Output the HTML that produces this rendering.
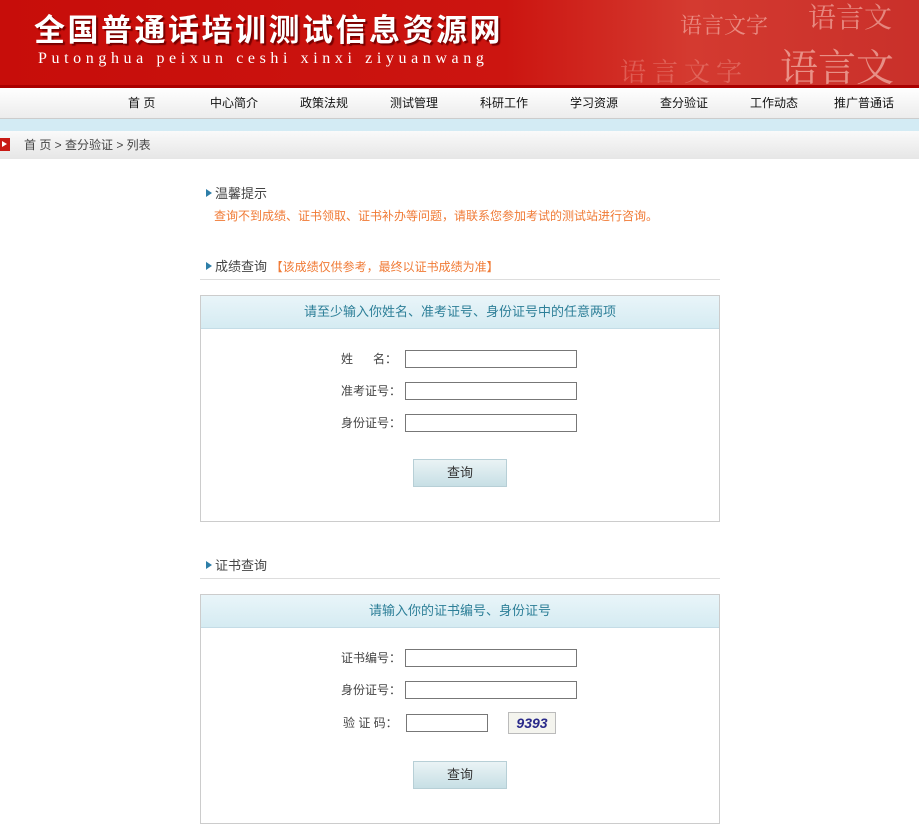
<!DOCTYPE html>
<html><head><meta charset="utf-8"><style>
*{margin:0;padding:0;box-sizing:border-box}
body{width:919px;height:810px;overflow:hidden;background:#fff;font-family:"Liberation Sans","Noto Sans CJK SC",sans-serif;font-size:12px;color:#333;position:relative;line-height:1.2}
.hd{position:absolute;left:0;top:0;width:919px;height:87px;background:linear-gradient(90deg,#c70d0a 0%,#cc1510 55%,#d43a30 75%,#c9302a 100%);overflow:hidden}
.hd .t{position:absolute;left:34px;top:8px;font-size:31px;line-height:40px;font-weight:bold;color:#fff;letter-spacing:2.5px;text-shadow:2px 2px 1px #700;font-family:"Noto Sans CJK SC",sans-serif}
.hd .s{position:absolute;left:38px;top:49px;font-size:16px;line-height:20px;color:#fff;letter-spacing:4.6px;font-family:"Liberation Serif",serif}
.hd .w{position:absolute;color:rgba(255,220,210,.5);font-family:"Noto Serif CJK SC",serif;line-height:1}
.hdb{position:absolute;left:0;top:85px;width:919px;height:3px;background:#a00}
.nav{position:absolute;left:0;top:88px;width:919px;height:31px;background:linear-gradient(#fff,#ececec);border-bottom:1px solid #ccc}
.nav span{position:absolute;top:8px;font-size:12px;color:#111}
.strip{position:absolute;left:0;top:119px;width:919px;height:12px;background:#d3ebf4}
.bc{position:absolute;left:0;top:131px;width:919px;height:28px;background:linear-gradient(#fafafa,#e6e6e6)}
.bc i{position:absolute;left:0;top:7px;width:10px;height:13px;background:#c81a14}
.bc i:after{content:"";position:absolute;left:2px;top:3px;border-left:5px solid #fff;border-top:3.5px solid transparent;border-bottom:3.5px solid transparent}
.bc span{position:absolute;left:24px;top:7px;color:#444}
.h{position:absolute;left:206px;font-size:13px;color:#444}
.h:before{content:"";display:inline-block;border-left:6px solid #2d7ea8;border-top:4px solid transparent;border-bottom:4px solid transparent;margin-right:3px;vertical-align:1px}
.or{color:#f07a35}
.line{position:absolute;left:200px;width:520px;border-top:1px solid #ddd}
.box{position:absolute;left:200px;width:520px;border:1px solid #ccc}
.bar{height:33px;background:linear-gradient(#e9f5f9,#d5ebf2);border-bottom:1px solid #c4dce6;text-align:center;line-height:32px;font-size:13px;color:#2d7f98}
.lb{position:absolute;left:341px;font-size:12px;color:#444}
.in{position:absolute;left:405px;width:172px;height:18px;border:1px solid #777;background:#fff}
.btn{position:absolute;left:413px;width:94px;height:28px;background:linear-gradient(#eaf3f5,#c7dfe5);border:1px solid #b7cfd6;text-align:center;line-height:26px;font-size:13px;color:#333}
</style></head><body>
<div class="hd">
<div class="w" style="left:680px;top:14px;font-size:22px">语言文字</div>
<div class="w" style="left:808px;top:2px;font-size:28px">语言文</div>
<div class="w" style="left:620px;top:58px;font-size:26px;letter-spacing:6px;color:rgba(255,200,190,.3)">语言文字</div>
<div class="w" style="left:780px;top:46px;font-size:38px;color:rgba(255,220,210,.55)">语言文</div>
<div class="t">全国普通话培训测试信息资源网</div>
<div class="s">Putonghua peixun ceshi xinxi ziyuanwang</div>
</div>
<div class="hdb"></div>
<div class="nav">
<span style="left:128px">首 页</span><span style="left:210px">中心简介</span><span style="left:300px">政策法规</span><span style="left:390px">测试管理</span><span style="left:480px">科研工作</span><span style="left:570px">学习资源</span><span style="left:660px">查分验证</span><span style="left:750px">工作动态</span><span style="left:834px">推广普通话</span>
</div>
<div class="strip"></div>
<div class="bc"><i></i><span>首 页 &gt; 查分验证 &gt; 列表</span></div>

<div class="h" style="top:186px">温馨提示</div>
<div class="or" style="position:absolute;left:214px;top:209px;font-size:12px">查询不到成绩、证书领取、证书补办等问题，请联系您参加考试的测试站进行咨询。</div>

<div class="h" style="top:259px">成绩查询 <span class="or" style="font-size:12px">【该成绩仅供参考，最终以证书成绩为准】</span></div>
<div class="line" style="top:279px"></div>
<div class="box" style="top:295px;height:227px"><div class="bar">请至少输入你姓名、准考证号、身份证号中的任意两项</div></div>
<div class="lb" style="top:352px">姓&nbsp;&nbsp;&nbsp;&nbsp;&nbsp;&nbsp;名：</div><div class="in" style="top:350px"></div>
<div class="lb" style="top:384px">准考证号：</div><div class="in" style="top:382px"></div>
<div class="lb" style="top:416px">身份证号：</div><div class="in" style="top:414px"></div>
<div class="btn" style="top:459px">查询</div>

<div class="h" style="top:558px">证书查询</div>
<div class="line" style="top:578px"></div>
<div class="box" style="top:594px;height:230px"><div class="bar">请输入你的证书编号、身份证号</div></div>
<div class="lb" style="top:651px">证书编号：</div><div class="in" style="top:649px"></div>
<div class="lb" style="top:683px">身份证号：</div><div class="in" style="top:681px"></div>
<div class="lb" style="top:716px;left:343px">验 证 码：</div><div class="in" style="top:714px;left:406px;width:82px"></div>
<div style="position:absolute;left:508px;top:712px;width:48px;height:22px;border:1px solid #bbb;background:#f4f4ee;text-align:center;font:italic bold 14px 'Liberation Sans',sans-serif;color:#2a2a8a;line-height:20px">9393</div>
<div class="btn" style="top:761px">查询</div>
</body></html>
